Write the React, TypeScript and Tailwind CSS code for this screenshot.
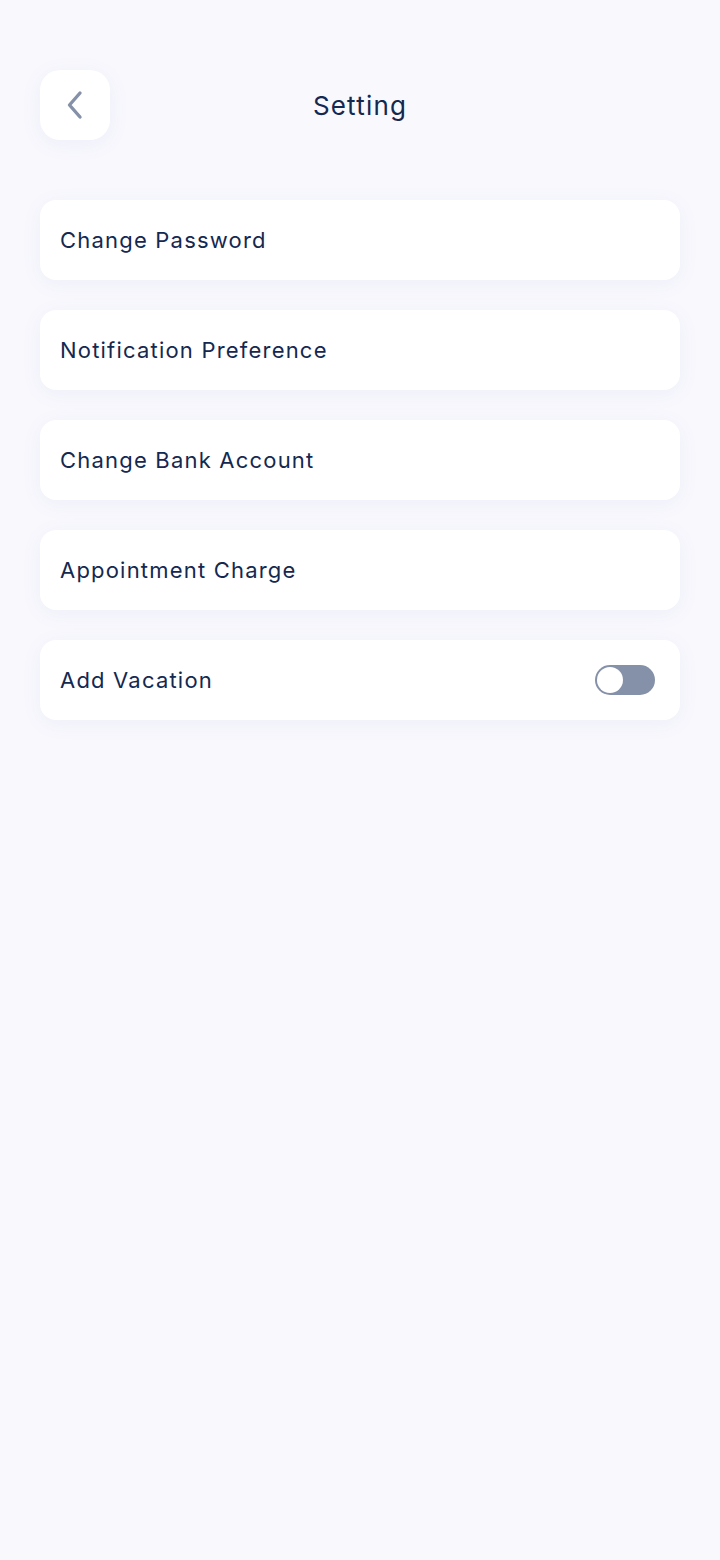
import React, { useState } from "react";

const items = [
  "Change Password",
  "Notification Preference",
  "Change Bank Account",
  "Appointment Charge",
];

export default function App() {
  const [on, setOn] = useState(false);
  return (
    <div
      className="min-h-[1560px] w-[720px] bg-[#f8f8fd] text-[#142850]"
      style={{ fontFamily: "Inter, 'Open Sans', sans-serif" }}
    >
      <div className="px-10 pt-[70px]">
        <div className="relative flex h-[70px] items-center justify-center">
          <button className="absolute left-0 top-0 flex h-[70px] w-[70px] items-center justify-center rounded-[20px] bg-white shadow-[0_4px_20px_rgba(120,130,200,0.08)]">
            <svg width="18" height="30" viewBox="0 0 18 30" fill="none">
              <path
                d="M14 3L3.5 15L14 27"
                stroke="#8591a8"
                strokeWidth="3.4"
                strokeLinecap="round"
                strokeLinejoin="round"
              />
            </svg>
          </button>
          <h1 className="text-[26px] font-normal tracking-[1.2px]">Setting</h1>
        </div>
        <div className="mt-[60px] flex flex-col gap-[30px]">
          {items.map((t) => (
            <div
              key={t}
              className="flex h-[80px] items-center rounded-[16px] bg-white px-5 shadow-[0_4px_20px_rgba(120,130,200,0.07)]"
            >
              <span className="text-[22px] tracking-[1.2px]">{t}</span>
            </div>
          ))}
          <div className="flex h-[80px] items-center justify-between rounded-[16px] bg-white pl-5 pr-[25px] shadow-[0_4px_20px_rgba(120,130,200,0.07)]">
            <span className="text-[22px] tracking-[1.2px]">Add Vacation</span>
            <button
              onClick={() => setOn(!on)}
              className="relative h-[30px] w-[60px] rounded-full bg-[#8591a8]"
            >
              <span className="absolute left-[2px] top-[2px] h-[26px] w-[26px] rounded-full bg-white" />
            </button>
          </div>
        </div>
      </div>
    </div>
  );
}
